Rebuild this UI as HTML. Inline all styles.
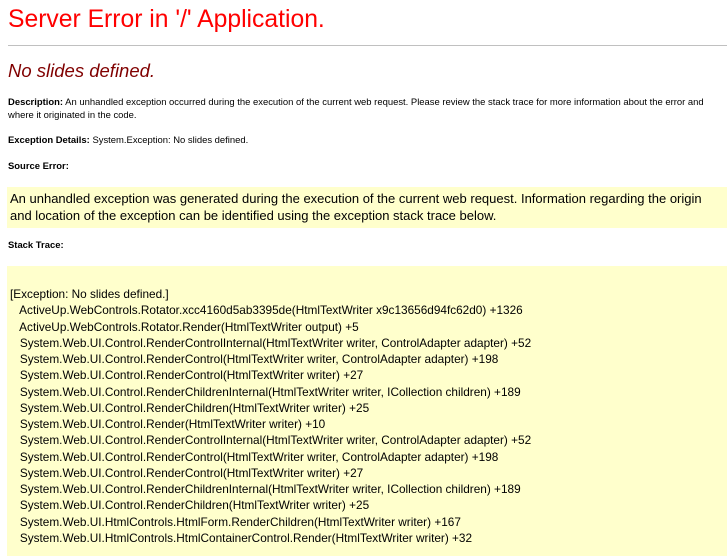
<!DOCTYPE html>
<html><head><meta charset="utf-8"><style>
body{margin:0;padding:0 8px;background:#fff;font-family:"Liberation Sans",Arial,sans-serif;color:#000;overflow:hidden;width:711px;height:545px}
h1{font-weight:normal;color:#f00;font-size:24.7px;margin:0;position:absolute;top:6px;left:8px;white-space:nowrap}
hr{position:absolute;top:45px;left:8px;width:719px;margin:0;border:0;border-top:1px solid #c0c0c0;height:0}
h2{font-weight:normal;font-style:italic;color:#800000;font-size:18.5px;margin:0;position:absolute;top:60px;left:8px}
.p{position:absolute;left:8px;font-size:9.45px;line-height:13px;width:712px}
b{font-weight:bold}
.box{position:absolute;left:7px;width:720px;background:#ffffcc;font-size:13px}
</style></head><body>
<h1>Server Error in '/' Application.</h1>
<hr>
<h2>No slides defined.</h2>
<div class="p" style="top:96px"><b>Description:</b> An unhandled exception occurred during the execution of the current web request. Please review the stack trace for more information about the error and where it originated in the code.</div>
<div class="p" style="top:134px"><b>Exception Details:</b> System.Exception: No slides defined.</div>
<div class="p" style="top:160px"><b>Source Error:</b></div>
<div class="box" style="top:187px;height:41px;line-height:17px;padding:3px 18px 0 3px;box-sizing:border-box">An unhandled exception was generated during the execution of the current web request. Information regarding the origin and location of the exception can be identified using the exception stack trace below.</div>
<div class="p" style="top:239px"><b>Stack Trace:</b></div>
<div class="box" style="top:266px;height:290px;line-height:16.25px;font-size:11.8px;padding:20px 0 0 3px;box-sizing:border-box;white-space:pre">[Exception: No slides defined.]
   ActiveUp.WebControls.Rotator.xcc4160d5ab3395de(HtmlTextWriter x9c13656d94fc62d0) +1326
   ActiveUp.WebControls.Rotator.Render(HtmlTextWriter output) +5
   System.Web.UI.Control.RenderControlInternal(HtmlTextWriter writer, ControlAdapter adapter) +52
   System.Web.UI.Control.RenderControl(HtmlTextWriter writer, ControlAdapter adapter) +198
   System.Web.UI.Control.RenderControl(HtmlTextWriter writer) +27
   System.Web.UI.Control.RenderChildrenInternal(HtmlTextWriter writer, ICollection children) +189
   System.Web.UI.Control.RenderChildren(HtmlTextWriter writer) +25
   System.Web.UI.Control.Render(HtmlTextWriter writer) +10
   System.Web.UI.Control.RenderControlInternal(HtmlTextWriter writer, ControlAdapter adapter) +52
   System.Web.UI.Control.RenderControl(HtmlTextWriter writer, ControlAdapter adapter) +198
   System.Web.UI.Control.RenderControl(HtmlTextWriter writer) +27
   System.Web.UI.Control.RenderChildrenInternal(HtmlTextWriter writer, ICollection children) +189
   System.Web.UI.Control.RenderChildren(HtmlTextWriter writer) +25
   System.Web.UI.HtmlControls.HtmlForm.RenderChildren(HtmlTextWriter writer) +167
   System.Web.UI.HtmlControls.HtmlContainerControl.Render(HtmlTextWriter writer) +32</div>
</body></html>
